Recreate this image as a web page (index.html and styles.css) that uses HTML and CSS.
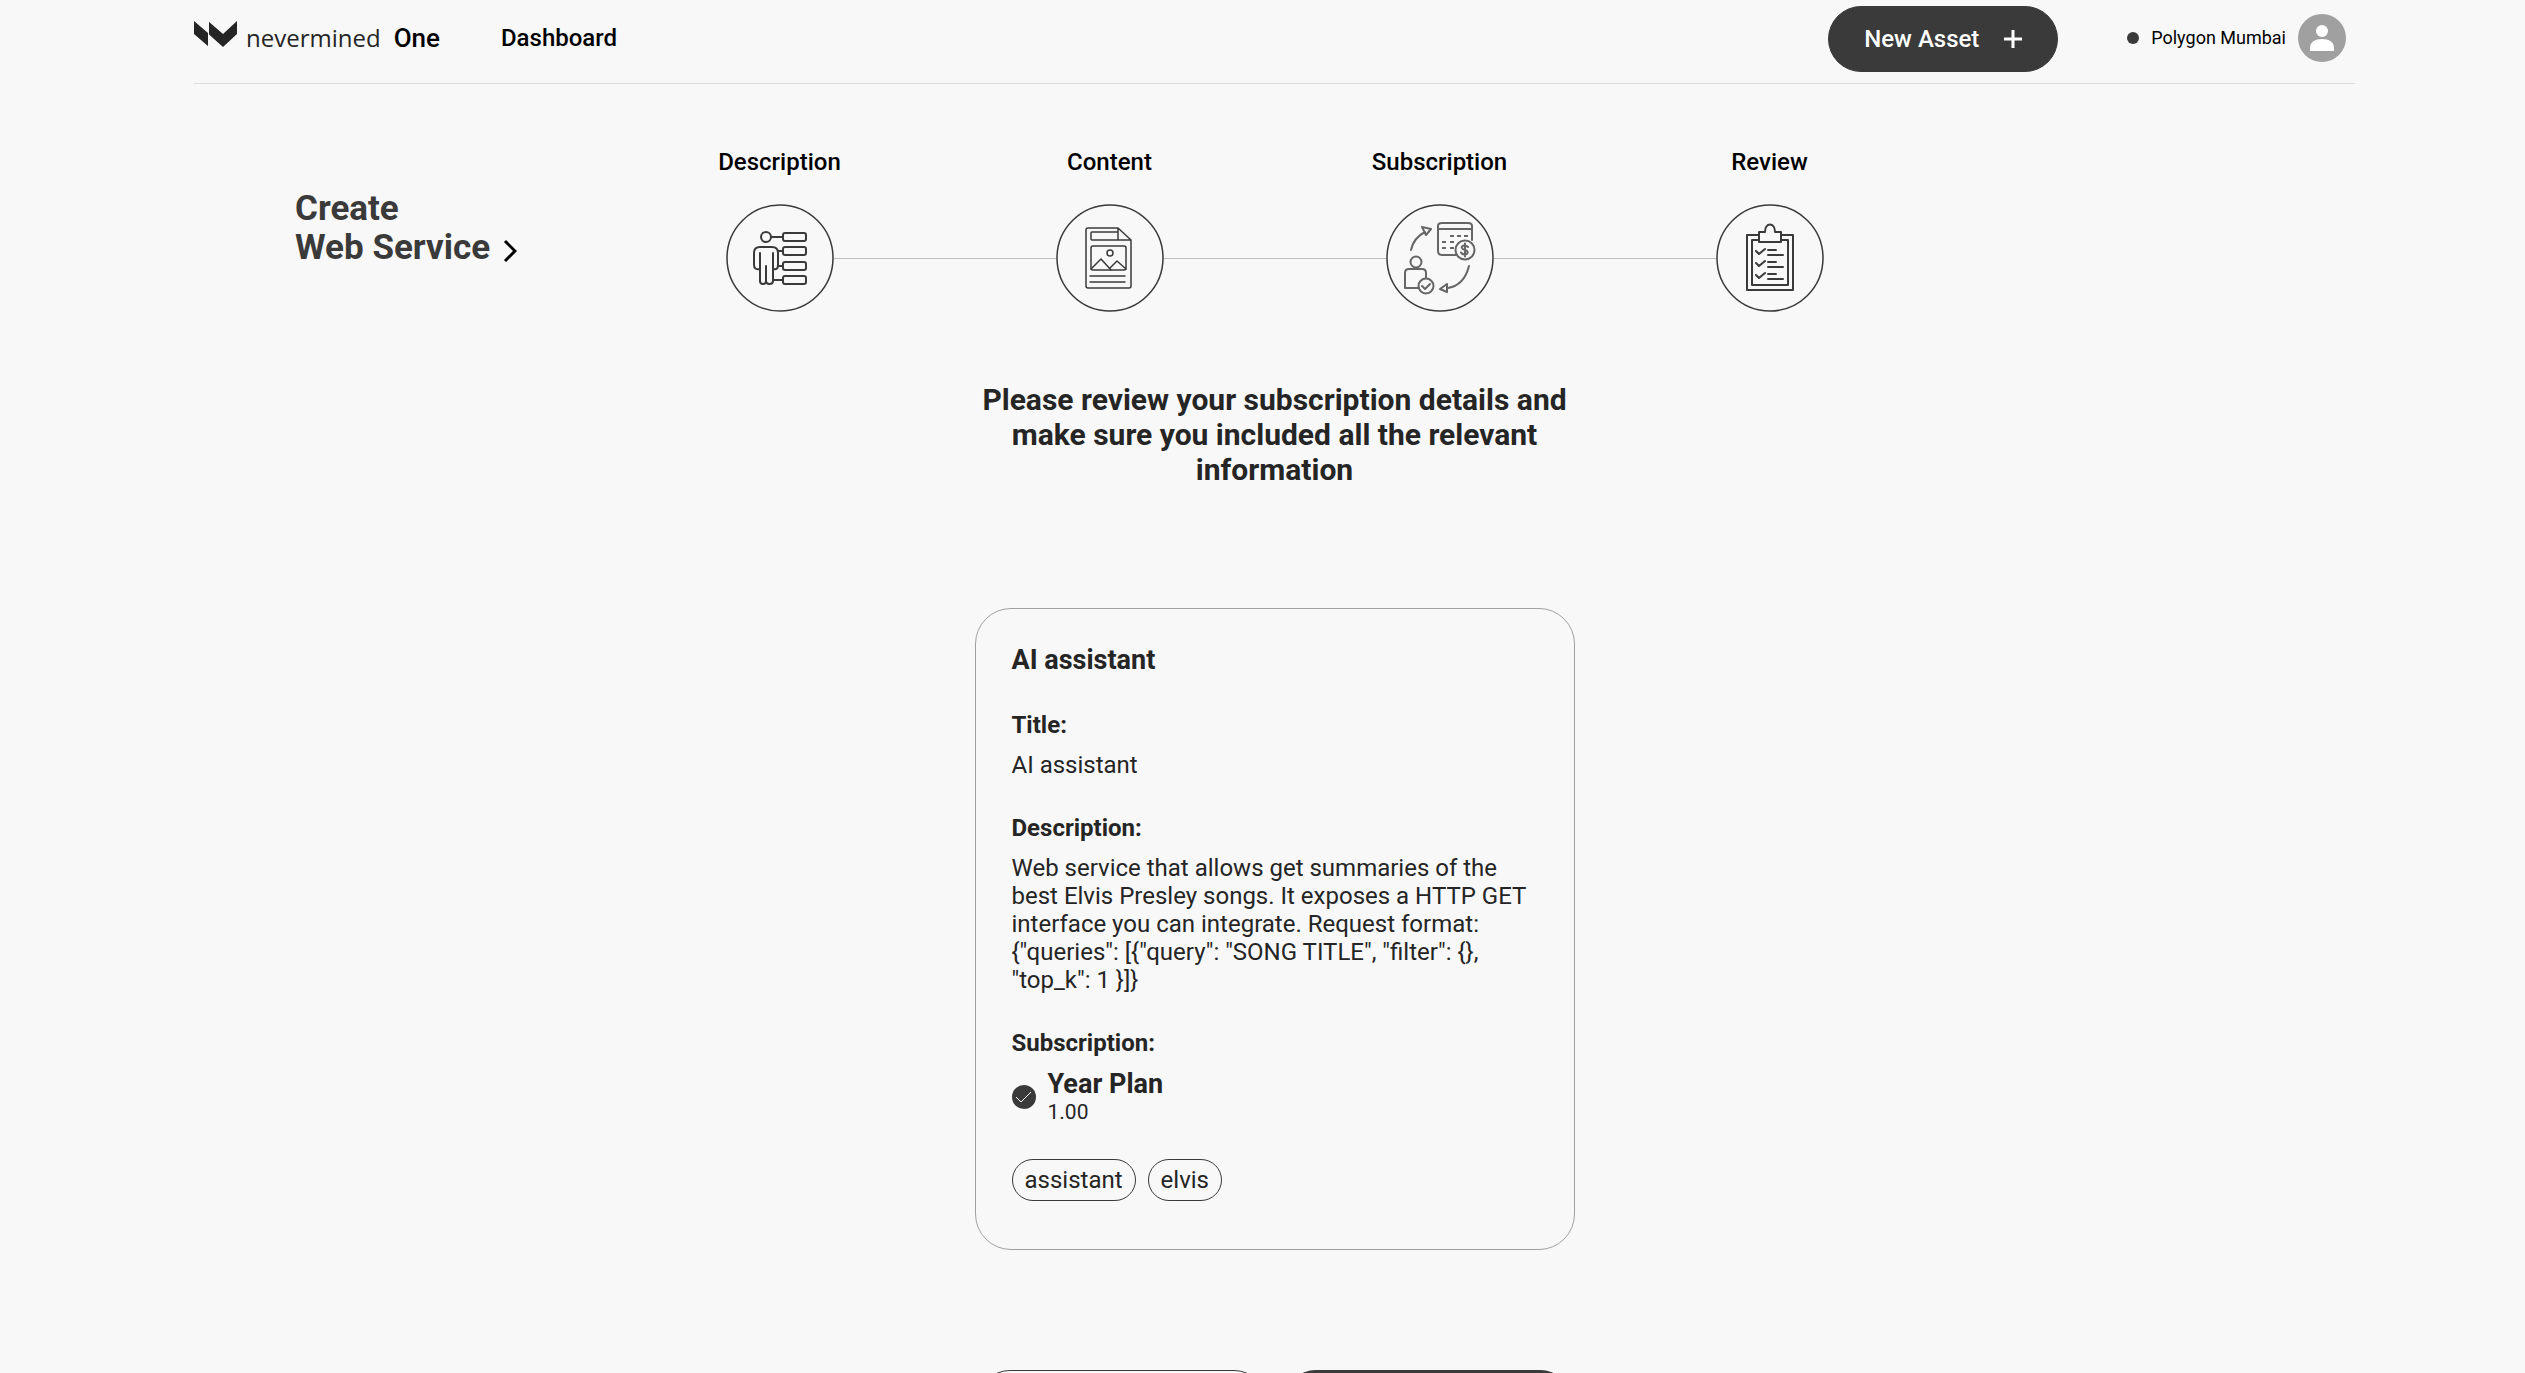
FILE: index.html
```html
<!DOCTYPE html>
<html lang="en">
<head>
<meta charset="utf-8">
<meta name="viewport" content="width=device-width, initial-scale=1">
<title>Nevermined One</title>
<link rel="stylesheet" href="styles.css">
</head>
<body>
<div class="page">
  <header class="header">
    <a class="logo" href="#">
      <svg class="logo-mark" viewBox="0 0 43 26" aria-hidden="true"><path d="M0 0l14 12V0l15 13L43 0v13L29 26 14.500 13V25.500L0 13z"/><path class="logo-gap" d="M14.500 0v26"/></svg>
      <span class="logo-name">nevermined</span>
      <span class="logo-one">One</span>
    </a>
    <nav class="nav"><a class="nav-link" href="#">Dashboard</a></nav>
    <button class="button button-new" type="button">New Asset
      <svg class="plus" viewBox="0 0 18 18" aria-hidden="true"><path d="M9 0v18M0 9h18"/></svg>
    </button>
    <div class="account">
      <span class="dot"></span>
      <span class="network">Polygon Mumbai</span>
      <button class="avatar" type="button" aria-label="Account">
        <svg viewBox="0 0 48 48" aria-hidden="true"><circle cx="24" cy="17" r="6"/><path d="M12 37v-3c0-6 5-9 12-9s12 3 12 9v3z"/></svg>
      </button>
    </div>
  </header>

  <main class="main">
    <h1 class="title"><span>Create<br>Web Service</span>
      <svg class="chevron" viewBox="0 0 14 24" aria-hidden="true"><path d="M2 2l10 10L2 22"/></svg>
    </h1>

    <section class="content">
      <ol class="steps">
        <li class="step"><span class="step-label">Description</span>
          <span class="step-circle"><svg viewBox="0 0 108 108" aria-hidden="true">
            <circle class="ring" cx="54" cy="54" r="53"/>
            <circle cx="40" cy="33" r="5"/>
            <path d="M45 33h12M52 47h5M52 62h5M47 76h10"/>
            <rect x="57" y="29" width="23" height="8" rx="2"/><rect x="57" y="43" width="23" height="8" rx="2"/><rect x="57" y="58" width="23" height="8" rx="2"/><rect x="57" y="72" width="23" height="8" rx="2"/>
            <path d="M34 49V77q0 3 3 3t3-3V62M40 77q0 3 3.500 3t3.500-3V49M34 65c-4 1-6-1-6-4V49c0-4 2-6 6-6h12c4 0 6 2 6 6v12c0 3-1 5-5 4"/>
          </svg></span></li>
        <li class="step"><span class="step-label">Content</span>
          <span class="step-circle"><svg class="fine" viewBox="0 0 108 108" aria-hidden="true">
            <circle class="ring" cx="54" cy="54" r="53"/>
            <path d="M62 24H32q-2 0-2 2v56q0 2 2 2h41q2 0 2-2V36L62 24v12h13M61 28H36q-1 0-1 1v6q0 1 1 1h26"/>
            <rect x="35" y="42" width="35" height="24" rx="2"/><circle cx="54" cy="49" r="3"/>
            <path d="M35 65l10-10 10 11M54 64l7-7 9 8M34 72h35M34 78h35"/>
          </svg></span></li>
        <li class="step"><span class="step-label">Subscription</span>
          <span class="step-circle"><svg class="soft" viewBox="0 0 108 108" aria-hidden="true">
            <circle class="ring" cx="54" cy="54" r="53"/>
            <path d="M70 51H56q-4 0-4-4V22q0-3 4-3h26q4 0 4 3v14M52 25h34"/>
            <path class="dash" d="M64 32h4M71 32h4M78 32h4M56 38h4M64 38h4M56 44h4M64 44h4"/>
            <circle cx="79" cy="46" r="9.500"/><path d="M82 43q-2-2-4-1.500c-4 1-2 4 1 4.500s4 4 0 4.500q-3 0-4-2M79 39.500v13"/>
            <circle cx="30" cy="58" r="5.500"/><path d="M33 84H19V69q0-4 4-4h13q4 0 4 4v5"/>
            <circle cx="40" cy="82" r="7.500"/><path d="M36 82l3 3 5-5"/>
            <path d="M25 46c2-9 6-14 14-18M36 23l9 2-5 6zM83 62c-3 12-9 20-21 22M61 80l-7 5 7 3z"/>
          </svg></span></li>
        <li class="step"><span class="step-label">Review</span>
          <span class="step-circle"><svg viewBox="0 0 108 108" aria-hidden="true">
            <circle class="ring" cx="54" cy="54" r="53"/>
            <path d="M43 31H31v55h46V31H65"/><path d="M43 36H36v45h36V36h-7"/>
            <path d="M43 38V28h6c0-10 10-10 10 0h6v10z"/>
            <path d="M40 47l3 3 6-5M40 59l3 3 6-5M40 71l3 3 6-5M52 46h8M52 51h15M52 58h8M52 63h15M52 70h8M52 75h15"/>
          </svg></span></li>
      </ol>

      <h2 class="lead">Please review your subscription details and make sure you included all the relevant information</h2>

      <article class="card">
        <h3 class="card-title">AI assistant</h3>
        <h4 class="field">Title:</h4>
        <p class="text">AI assistant</p>
        <h4 class="field">Description:</h4>
        <p class="text">Web service that allows get summaries of the best Elvis Presley songs. It exposes a HTTP GET interface you can integrate. Request format: {"queries": [{"query": "SONG TITLE", "filter": {}, "top_k": 1 }]}</p>
        <h4 class="field">Subscription:</h4>
        <div class="plan">
          <svg class="check" viewBox="0 0 24 24" aria-hidden="true"><circle cx="12" cy="12" r="12"/><path d="M4 12l5 5L19 7"/></svg>
          <div><strong class="plan-name">Year Plan</strong><span class="plan-price">1.00</span></div>
        </div>
        <ul class="tags"><li class="tag">assistant</li><li class="tag">elvis</li></ul>
      </article>

      <div class="actions">
        <button class="button button-outline" type="button" aria-label="Back"></button>
        <button class="button" type="button" aria-label="Submit"></button>
      </div>
    </section>
  </main>
</div>
</body>
</html>
```
FILE: styles.css
```css
* { box-sizing: border-box; }

body {
  margin: 0;
  background: #f8f8f8;
  color: #252525;
  font-family: Roboto, "Liberation Sans", sans-serif;
  font-size: 24px;
  line-height: 28px;
}

h1, h2, h3, h4, p, ol, ul { margin: 0; padding: 0; }
ol, ul { list-style: none; }
a { color: inherit; text-decoration: none; }
svg { display: block; fill: none; }

.page {
  max-width: 2185px;
  margin: 0 auto;
  padding-left: 24px;
}

/* Header */
.header {
  display: flex;
  align-items: center;
  height: 84px;
  padding: 0 9px 6px 0;
  border-bottom: 1px solid #dcdcdc;
  color: #000;
}
.logo, .nav, .account { padding-bottom: 2px; }
.logo { display: flex; align-items: center; font-size: 26px; }
.logo-mark { width: 43px; height: 26px; margin: 0 9px 8px 0; }
.logo-mark path { fill: #252525; }
.logo-mark .logo-gap { stroke: #f8f8f8; stroke-width: 1; }
.logo-name { margin-right: 13px; color: #252525; font-family: "Open Sans", "Noto Sans", sans-serif; font-size: 24px; }
.logo-one { font-weight: 500; }
.nav { flex: 1; padding-left: 61px; font-weight: 500; }

.button {
  height: 66px;
  border: 1px solid #3a3a3a;
  border-radius: 33px;
  background: #3a3a3a;
  color: #fff;
  font: 500 24px/28px Roboto, sans-serif;
}
.button-new {
  display: flex;
  align-items: center;
  justify-content: space-between;
  width: 230px;
  padding: 0 35px;
}
.plus { width: 18px; height: 18px; stroke: #fff; stroke-width: 3; }

.account { display: flex; align-items: center; margin-left: 69px; font-size: 18px; }
.dot { width: 12px; height: 12px; border-radius: 50%; background: #3a3a3a; }
.network { margin: 0 12px; }
.avatar { width: 48px; height: 48px; padding: 0; border: 0; border-radius: 50%; background: #a0a0a0; }
.avatar svg { fill: #fff; }

/* Page body */
.main {
  display: grid;
  grid-template-columns: minmax(300px, 1fr) minmax(0, 1320px) minmax(0, 1fr);
}
.title {
  display: flex;
  align-items: flex-end;
  gap: 13px;
  align-self: start;
  padding: 105px 0 0 101px;
  color: #3a3a3a;
  font-size: 35px;
  line-height: 39px;
  white-space: nowrap;
}
.chevron { width: 14px; height: 24px; margin-bottom: 4px; stroke: #000; stroke-width: 3; }
.content { display: flex; flex-direction: column; align-items: center; }

/* Stepper */
.steps {
  display: grid;
  grid-template-columns: repeat(4, 1fr);
  width: 100%;
  padding-top: 64px;
  color: #000;
}
.step { display: flex; flex-direction: column; align-items: center; gap: 28px; font-weight: 500; }
.step-circle {
  display: grid;
  grid-template-columns: 1fr 108px 1fr;
  align-items: center;
  width: 100%;
}
.step-circle::before, .step-circle::after { content: ""; height: 1px; background: #bdbdbd; }
.step:first-child .step-circle::before, .step:last-child .step-circle::after { background: none; }
.step-circle svg {
  width: 108px;
  height: 108px;
  stroke: #3a3a3a;
  stroke-width: 2;
  stroke-linecap: round;
  stroke-linejoin: round;
}
.step-circle .fine { stroke-width: 1.500; }
.step-circle .soft { stroke: #666; }
.step-circle .dash { stroke-linecap: butt; }
.step-circle .ring { stroke: #3a3a3a; stroke-width: 1.500; }

.lead {
  max-width: 600px;
  padding-top: 70px;
  font-size: 30px;
  line-height: 35px;
  text-align: center;
}

/* Review card */
.card {
  width: 100%;
  max-width: 600px;
  margin-top: 121px;
  padding: 36px 36px 48px;
  border: 1px solid #a0a0a0;
  border-radius: 36px;
}
.card-title, .plan-name { font-size: 27px; line-height: 31px; }
.field { margin-top: 35px; font-size: 24px; line-height: 28px; }
.text { margin-top: 12px; }
.plan { display: flex; align-items: center; gap: 12px; margin-top: 12px; }
.plan-name, .plan-price { display: block; }
.plan-price { font-size: 21px; line-height: 24px; }
.check { width: 24px; height: 24px; }
.check circle { fill: #3a3a3a; }
.check path { stroke: #fff; stroke-width: 1; }
.tags { display: flex; gap: 12px; margin-top: 35px; }
.tag { padding: 6px 12px; border: 1px solid #3a3a3a; border-radius: 21px; }

.actions { display: flex; gap: 16px; margin-top: 120px; padding-bottom: 60px; }
.actions .button { width: 290px; }
.button-outline { background: transparent; }
```
